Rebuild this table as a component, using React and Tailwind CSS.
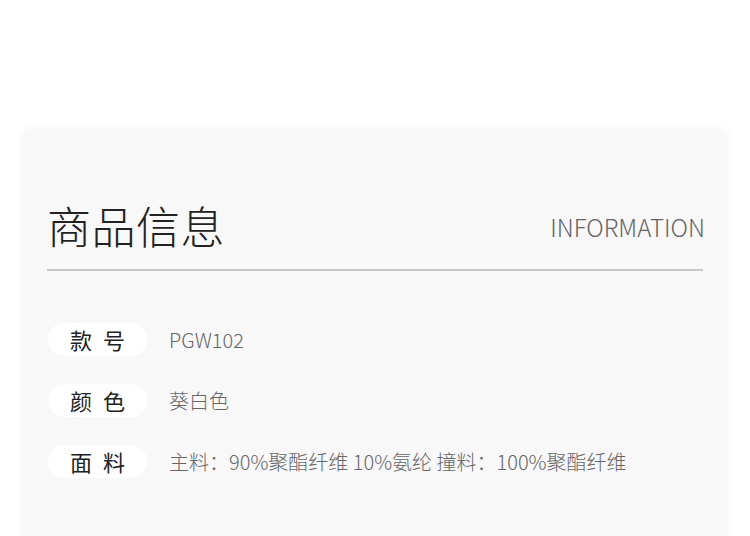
import React from 'react';

const rows = [
  { label: '款 号', value: 'PGW102' },
  { label: '颜 色', value: '葵白色' },
  { label: '面 料', value: '主料：90%聚酯纤维 10%氨纶 撞料：100%聚酯纤维' },
];

const cjk = { fontFamily: '"Noto Sans CJK SC", "Noto Sans", sans-serif' };

export default function App() {
  return (
    <div className="w-[750px] h-[536px] bg-white overflow-hidden pt-[130px] px-[23px]" style={cjk}>
      <div className="h-[420px] bg-[#f8f8f8] rounded-t-[6px] shadow-[0_0_10px_rgba(0,0,0,0.06)] px-[24px] pt-[67px]">
        {/* ── Header ───────────────────────────── */}
        <div className="flex items-end justify-between -mr-[2px]">
          <h1 className="text-[44px] leading-[56px] font-light text-[#222] tracking-[0.5px]">商品信息</h1>
          <span className="text-[24px] leading-[40px] font-light text-[#666] mb-[6px]">INFORMATION</span>
        </div>
        <div className="mt-[16px] h-[2px] bg-[#c8c8c8]" />

        {/* ── Rows ─────────────────────────────── */}
        <div className="mt-[52px] flex flex-col gap-[28px]">
          {rows.map(r => (
            <div key={r.label} className="flex items-center">
              <div className="ml-[1px] w-[99px] h-[33px] rounded-full bg-white flex items-center justify-center">
                <span className="text-[22px] text-[#222] tracking-[3px] pl-[3px] whitespace-pre">{r.label}</span>
              </div>
              <span className="ml-[22px] text-[20px] font-light text-[#666]">{r.value}</span>
            </div>
          ))}
        </div>
      </div>
    </div>
  );
}
